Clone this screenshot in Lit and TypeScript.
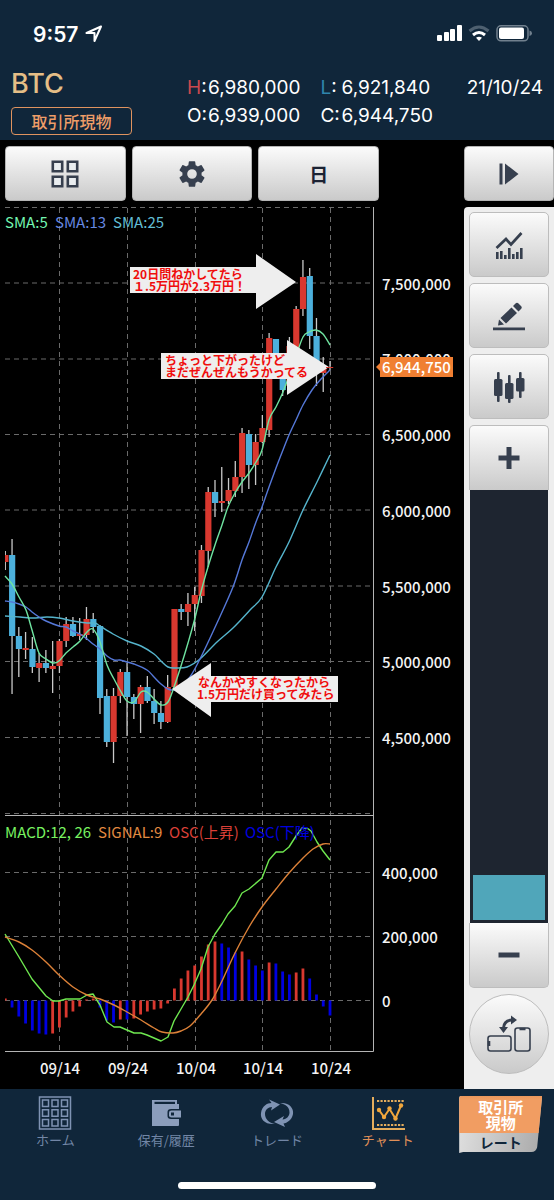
import { LitElement, html, svg, css } from "lit";
import { customElement } from "lit/decorators.js";

type Point = [number, number];
/** open/close edges and wick edges in chart units; up candles are red */
type Candle = [up: number, top: number, bottom: number, high: number, low: number];

const LAST_X = 330;
const DAY = 6.765;
const dayX = (i: number) => LAST_X - (48 - i) * DAY;

const CANDLES: Candle[] = [
  [1, 555, 562, 551, 570], [0, 555, 636, 539, 694], [0, 636, 649, 627, 677],
  [1, 648, 650, 632, 659], [0, 649, 667, 637, 673], [1, 663, 668, 653, 682],
  [0, 663, 668, 650, 673], [1, 666, 669, 641, 693], [1, 641, 666, 639, 673],
  [1, 624, 641, 617, 647], [0, 624, 636, 617, 637], [1, 634, 636, 618, 640],
  [1, 619, 635, 607, 640], [0, 619, 627, 613, 633], [0, 626, 698, 625, 714],
  [0, 696, 742, 689, 747], [1, 696, 742, 688, 763], [1, 672, 696, 669, 703],
  [0, 672, 697, 663, 736], [0, 697, 704, 694, 719], [1, 687, 704, 685, 733],
  [0, 687, 701, 676, 703], [0, 701, 713, 689, 724], [0, 713, 722, 701, 729],
  [1, 687, 722, 675, 723], [1, 609, 687, 609, 687], [0, 609, 612, 604, 620],
  [1, 604, 612, 593, 626], [1, 595, 604, 587, 631], [1, 550, 596, 545, 603],
  [1, 492, 551, 487, 567], [0, 492, 503, 480, 517], [1, 501, 503, 467, 512],
  [1, 490, 501, 478, 504], [1, 477, 491, 461, 497], [1, 433, 477, 428, 493],
  [0, 434, 465, 430, 489], [1, 442, 465, 434, 485], [1, 428, 442, 415, 443],
  [1, 338, 430, 333, 437], [0, 339, 370, 339, 374], [0, 366, 390, 360, 396],
  [1, 346, 386, 337, 390], [1, 309, 350, 306, 356], [1, 277, 309, 260, 316],
  [0, 276, 336, 268, 349], [0, 336, 368, 318, 386], [1, 368, 373, 357, 392],
  [1, 367, 368, 361, 370],
];

const OSC: [rising: number, value: number][] = [
  [1, 2], [0, -7], [0, -16], [0, -23], [0, -30], [0, -33], [0, -34], [1, -33],
  [1, -27], [1, -17], [1, -11], [1, -6], [1, 1], [1, 2], [0, -7], [0, -20],
  [0, -22], [1, -19], [0, -19], [1, -18], [1, -14], [1, -11], [1, -9], [1, -8],
  [1, -3], [1, 12], [1, 22], [1, 30], [1, 35], [1, 44], [1, 56], [1, 59],
  [0, 57], [0, 53], [0, 48], [1, 49], [0, 41], [0, 35], [0, 30], [1, 38],
  [0, 37], [0, 29], [0, 26], [1, 28], [1, 32], [0, 22], [0, 6], [0, -6], [0, -15],
];

const SMA5: Point[] = [
  [5, 576], [12, 584], [19, 597], [26, 610], [32, 630], [39, 653], [46, 659], [53, 663],
  [59, 661], [66, 653], [73, 647], [80, 641], [87, 632], [93, 629], [100, 642], [107, 665],
  [114, 679], [120, 690], [127, 701], [134, 702], [141, 692], [147, 692], [154, 699],
  [161, 705], [168, 702], [174, 687], [181, 666], [188, 643], [195, 618], [201, 592],
  [208, 567], [215, 545], [222, 525], [228, 507], [235, 493], [242, 482], [249, 473],
  [256, 462], [262, 450], [269, 420], [276, 407], [283, 392], [289, 376], [296, 356],
  [303, 337], [309, 332], [316, 330], [323, 334], [330, 345],
];
const SMA13: Point[] = [
  [5, 601], [12, 602], [19, 604], [26, 607], [32, 612], [39, 617], [46, 621], [59, 626],
  [66, 627], [73, 631], [80, 634], [87, 639], [93, 644], [100, 649], [107, 656], [114, 660],
  [120, 660], [127, 662], [134, 664], [147, 670], [154, 677], [161, 684], [168, 689],
  [174, 690], [181, 686], [190, 677], [201, 657], [217, 623], [233, 587], [242, 560],
  [249, 542], [256, 522], [262, 507], [269, 487], [276, 468], [283, 450], [289, 435],
  [296, 420], [303, 405], [312, 390], [321, 379], [330, 370],
];
const SMA25: Point[] = [
  [5, 616], [20, 617], [33, 618], [47, 617], [59, 618], [73, 621], [87, 623], [95, 623],
  [100, 626], [113, 634], [127, 641], [141, 646], [154, 654], [161, 661], [168, 667],
  [175, 668], [187, 667], [200, 659], [217, 642], [233, 628], [250, 610], [262, 597],
  [276, 567], [289, 542], [303, 510], [317, 482], [330, 455],
];
const MACD: Point[] = [
  [5, 934], [19, 957], [32, 979], [46, 996], [53, 1001], [59, 1001], [66, 999], [80, 999],
  [87, 995], [93, 994], [100, 1005], [107, 1022], [114, 1027], [120, 1027], [134, 1033],
  [141, 1033], [147, 1035], [161, 1041], [168, 1037], [174, 1021], [181, 1009], [188, 997],
  [194, 985], [201, 969], [208, 947], [215, 934], [222, 924], [228, 914], [235, 906],
  [242, 893], [249, 889], [262, 878], [269, 860], [276, 852], [283, 852], [289, 847],
  [296, 836], [302, 828], [307, 828], [311, 831], [317, 842], [323, 851], [330, 860],
];
const SIGNAL: Point[] = [
  [5, 937], [19, 942], [32, 950], [46, 962], [59, 975], [73, 987], [87, 995], [100, 999],
  [114, 1005], [127, 1012], [141, 1020], [154, 1028], [162, 1032], [173, 1033], [181, 1031],
  [190, 1026], [201, 1014], [212, 1000], [222, 981], [235, 953], [249, 927], [262, 907],
  [276, 889], [289, 873], [303, 858], [313, 849], [323, 844], [330, 844],
];

const PRICE_TICKS: [string, number][] = [
  ["7,500,000", 283], ["7,000,000", 358], ["6,500,000", 434], ["6,000,000", 510],
  ["5,500,000", 586], ["5,000,000", 661], ["4,500,000", 737],
];
const MACD_TICKS: [string, number][] = [["400,000", 872], ["200,000", 936], ["0", 1000]];
const DATES: [string, number][] = [
  ["09/14", 59], ["09/24", 127], ["10/04", 195], ["10/14", 262], ["10/24", 330],
];

/** Catmull-Rom through the samples, written as cubic segments */
const smooth = (p: Point[]) => {
  let d = `M${p[0][0]} ${p[0][1]}`;
  for (let i = 0; i < p.length - 1; i++) {
    const a = p[i - 1] ?? p[i], b = p[i], c = p[i + 1], e = p[i + 2] ?? c;
    d += `C${b[0] + (c[0] - a[0]) / 6} ${b[1] + (c[1] - a[1]) / 6} ${c[0] - (e[0] - b[0]) / 6} ${c[1] - (e[1] - b[1]) / 6} ${c[0]} ${c[1]}`;
  }
  return d;
};
const straight = (p: Point[]) => "M" + p.map((q) => q.join(" ")).join("L");

@customElement("trade-chart")
export class TradeChart extends LitElement {
  static styles = css`
    :host { display: block; }
    .plot { display: block; width: 100%; height: auto; }
    text { font-family: "Noto Sans CJK JP", sans-serif; font-size: 15px; }
    .tick { fill: #f4f4f4; font-weight: 500; }
    .date { text-anchor: middle; }
    .grid { stroke: #6a6a6a; stroke-width: 1; stroke-dasharray: 5 4; fill: none; }
    .axis { stroke: #b4b4b4; stroke-width: 1; fill: none; }
    .wick { stroke: #c9c9c9; stroke-width: 1.3; }
    .up { fill: #d9382f; }
    .down { fill: #4cb0dc; }
    .osc-up { fill: #d9382f; }
    .osc-down { fill: #0000e0; }
    .line { fill: none; stroke-width: 1.4; stroke-linejoin: round; }
    .sma5 { stroke: #6fe3a0; }
    .sma13 { stroke: #5578d8; }
    .sma25 { stroke: #55b4cc; }
    .macd { stroke: #6fe850; }
    .signal { stroke: #dc8138; }
    .t-sma5 { fill: #73f5b0; }
    .t-sma13 { fill: #6688e0; }
    .t-sma25 { fill: #62bdd4; }
    .t-macd { fill: #78f260; }
    .t-signal { fill: #e38a40; }
    .t-up { fill: #dc4038; }
    .t-down { fill: #0000e0; }
    .tag { fill: #f07f32; }
    .tag-text { fill: #fff; font-weight: 500; }
    .note { fill: #eeeeee; }
    .note-text { fill: #f00d0d; font-size: 12px; font-weight: 700; }
  `;

  render() {
    return html`<svg class="plot" viewBox="0 207 464 882" role="img" aria-label="BTC">
      <defs><clipPath id="area"><rect x="5" y="207" width="369" height="845" /></clipPath></defs>
      ${[207.5, 283, 359, 434.5, 510, 586, 661.5, 737.5, 813.5, 872.5, 936.5, 1000.5].map(
        (y) => svg`<path class="grid" d="M5 ${y}H373" />`)}
      ${DATES.map(([, x]) => svg`<path class="grid" d="M${x + 0.5} 208V1051" />`)}
      <g clip-path="url(#area)">
        ${CANDLES.map(([up, top, bottom, high, low], i) => svg`
          <path class="wick" d="M${dayX(i)} ${high}V${low}" />
          <rect class=${up ? "up" : "down"} x=${dayX(i) - 3} y=${top} width="6.2" height=${bottom - top} />`)}
        ${OSC.map(([up, v], i) => svg`
          <rect class=${up ? "osc-up" : "osc-down"} x=${dayX(i) - 1.4} y=${v > 0 ? 1000.5 - v : 1000.5}
            width="2.8" height=${Math.abs(v)} />`)}
      </g>
      <path class="line sma25" d=${smooth(SMA25)} />
      <path class="line sma13" d=${smooth(SMA13)} />
      <path class="line sma5" d=${smooth(SMA5)} />
      <path class="line macd" d=${straight(MACD)} />
      <path class="line signal" d=${smooth(SIGNAL)} />
      <path class="axis" d="M373.5 207V1051.5H5M5 815.5H373.5" />

      <text class="t-sma5" x="5" y="228">SMA:5</text>
      <text class="t-sma13" x="55" y="228">SMA:13</text>
      <text class="t-sma25" x="113" y="228">SMA:25</text>
      <text class="t-macd" x="5" y="838">MACD:12, 26</text>
      <text class="t-signal" x="98" y="838">SIGNAL:9</text>
      <text class="t-up" x="169" y="838">OSC(上昇)</text>
      <text class="t-down" x="245" y="838">OSC(下降)</text>

      ${PRICE_TICKS.map(([t, y]) => svg`<text class="tick" x="382" y=${y + 7}>${t}</text>`)}
      ${MACD_TICKS.map(([t, y]) => svg`<text class="tick" x="382" y=${y + 7}>${t}</text>`)}
      ${DATES.map(([t, x]) => svg`<text class="tick date" x=${x + 1} y="1074">${t}</text>`)}

      <path class="tag" d="M376 367L380 363V357H453V377H380V371Z" />
      <text class="tag-text" x="382" y="373">6,944,750</text>

      <path class="note" d="M130 267H256V254L296 282L256 309V293H130Z" />
      <text class="note-text" x="133" y="279">20日問ねかしてたら</text>
      <text class="note-text" x="133" y="291">１.5万円が2.3万円！</text>
      <path class="note" d="M161 353H287V340L329 367L287 395V379H161Z" />
      <text class="note-text" x="165" y="365">ちょっと下がったけど</text>
      <text class="note-text" x="165" y="377">まだぜんぜんもうかってる</text>
      <path class="note" d="M338 676H211V663L172 689L211 717V702H338Z" />
      <text class="note-text" x="198" y="687">なんかやすくなったから</text>
      <text class="note-text" x="197" y="699">1.5万円だけ買ってみたら</text>
      <rect class="up" x="326" y="367" width="7" height="1" />
    </svg>`;
  }
}

@customElement("app-root")
export class AppRoot extends LitElement {
  static styles = css`
    :host {
      display: block;
      background: #10263a;
      color: #fff;
      font-family: Inter, "Noto Sans CJK JP", sans-serif;
    }
    button { font: inherit; margin: 0; padding: 0; cursor: pointer; }
    svg { display: block; }
    .status {
      display: flex; align-items: center; justify-content: space-between;
      height: 68px; padding: 0 22px 0 33px; box-sizing: border-box;
    }
    .clock { display: flex; align-items: center; gap: 7px; font-size: 21px; font-weight: 600; }
    .header {
      display: flex; align-items: flex-start;
      height: 72px; padding: 0 11px; box-sizing: border-box;
    }
    .market { flex: 0 0 176px; }
    .symbol { margin: 0; font-size: 27px; line-height: 32px; font-weight: 500; color: #e5be86; }
    .kind {
      width: 121px; height: 28px; margin-top: 7px; box-sizing: border-box;
      display: block; border: 1px solid #e0935f; border-radius: 4px;
      background: none; color: #ee9d68; font-size: 16px; line-height: 24px; font-weight: 500;
      font-family: "Noto Sans CJK JP", sans-serif;
    }
    .quote {
      display: grid; grid-template-columns: 21px auto 21px auto;
      margin: 6px 0 0; font-size: 19px; line-height: 28px;
    }
    .quote dt, .quote dd { margin: 0; white-space: nowrap; }
    .quote .gap { margin-right: 20px; }
    .high { color: #c9494e; }
    .low { color: #2f86ad; }
    .day { margin: 6px 0 0 auto; font-size: 19px; line-height: 28px; }

    .board { display: grid; grid-template-columns: 1fr 90px; background: #000; }
    .tools { display: flex; gap: 6px; padding: 6px 85px 6px 5px; }
    .tools.end { padding: 6px 0; }
    .key {
      display: flex; align-items: center; justify-content: center;
      flex: 1; height: 55px; box-sizing: border-box;
      border: 1px solid #b4b4b4; border-radius: 4px;
      background: linear-gradient(#fbfbfb, #cacaca);
      color: #363f4e;
    }
    .unit { font-family: "Noto Sans CJK JP", sans-serif; font-size: 19px; font-weight: 700; color: #1b2233; }
    .side {
      display: flex; flex-direction: column; gap: 6px;
      padding: 5px 5px 15px; background: #eeeeee; border-radius: 4px 0 0 0;
    }
    .side .key { flex: 0 0 65px; border: 1px solid #bdbdbd; border-radius: 5px; }
    .zoom { flex: 1; display: flex; flex-direction: column; }
    .zoom .first { border-radius: 5px 5px 0 0; border-bottom: 0; }
    .zoom .last { border-radius: 0 0 5px 5px; border-top: 0; }
    .range {
      flex: 1 1 300px; min-height: 0; width: 78px; margin: 0 1px; padding: 3px; box-sizing: border-box;
      appearance: none; -webkit-appearance: none;
      writing-mode: vertical-lr; direction: rtl; background: #1e2530;
    }
    .range::-webkit-slider-runnable-track { width: 72px; height: 100%; background: none; }
    .range::-webkit-slider-thumb {
      -webkit-appearance: none; width: 72px; height: 45px; background: #50a6ba; border-radius: 0;
    }
    .side .rotate { flex: 0 0 80px; border-radius: 50%; }

    .nav { display: grid; grid-template-columns: repeat(5, 1fr); height: 93px; padding-top: 6px; box-sizing: border-box; }
    .tab {
      display: flex; flex-direction: column; align-items: center;
      color: #7286a6; text-decoration: none; font-size: 13px; line-height: 18px;
      font-family: "Noto Sans CJK JP", sans-serif;
    }
    .tab.on { color: #e09058; }
    .rate {
      justify-self: start; width: 83px; height: 58px; margin-left: 16px; border: 0;
      background: linear-gradient(#e8955a, #f19d62 5px, #f19d62 38px, transparent 38px),
        linear-gradient(100deg, #e2e2e2, #a9a9a9);
      clip-path: path("M0 3Q0 1 2 1H83L78 52Q77 57 72 57H4L0 58Z");
      font-family: "Noto Sans CJK JP", sans-serif; font-weight: 700; color: #fff; font-size: 15px; line-height: 16px;
    }
    .rate-name { display: block; height: 38px; padding: 4px 0 0; box-sizing: border-box; }
    .rate-label { display: block; height: 20px; font-size: 14px; line-height: 18px; color: #10263a; }
    .foot { padding-bottom: 11px; }
    .home-bar { width: 198px; height: 7px; margin: 0 auto; border-radius: 4px; background: #fff; }
  `;

  render() {
    return html`
      <div class="status">
        <span class="clock">9:57
          <svg width="18" height="18" viewBox="0 0 18 18" fill="none" stroke="#fff" stroke-width="2" stroke-linejoin="round">
            <path d="M16 1.500L1.500 8H9.500V16Z" />
          </svg>
        </span>
        <svg width="95" height="18" viewBox="0 0 95 18" aria-hidden="true">
          <g fill="#fff">
            <rect x="0" y="10" width="5" height="6" rx="1" /><rect x="7" y="7" width="5" height="9" rx="1" />
            <rect x="13" y="4" width="5" height="12" rx="1" /><rect x="20" y="0" width="5" height="16" rx="1" />
            <path d="M42 16L39 12.800Q42 10.500 45 12.800Z" />
          </g>
          <path d="M32.500 6Q42 -2 51.500 6" fill="none" stroke="#4e6070" stroke-width="3" />
          <path d="M36 10Q42 5 48 10" fill="none" stroke="#fff" stroke-width="3" />
          <rect x="60" y="0.800" width="31" height="15" rx="4" fill="none" stroke="#71808e" stroke-width="1.500" />
          <rect x="62" y="2.500" width="25" height="11.600" rx="2" fill="#fff" />
          <path d="M92.500 5.500Q95 6 95 8.300T92.500 11Z" fill="#71808e" />
        </svg>
      </div>

      <header class="header">
        <div class="market">
          <h1 class="symbol">BTC</h1>
          <button class="kind">取引所現物</button>
        </div>
        <dl class="quote">
          <dt><span class="high">H</span>:</dt><dd class="gap">6,980,000</dd>
          <dt><span class="low">L</span>:</dt><dd>6,921,840</dd>
          <dt>O:</dt><dd class="gap">6,939,000</dd>
          <dt>C:</dt><dd>6,944,750</dd>
        </dl>
        <time class="day">21/10/24</time>
      </header>

      <main class="board">
        <div class="tools">
          <button class="key" aria-label="grid">
            <svg width="28" height="28" viewBox="0 0 28 28" fill="#e9edf0" stroke="currentColor" stroke-width="2.600">
              <path d="M1.800 1.800h9.400v9.400h-9.400zM16.800 1.800h9.400v9.400h-9.400zM1.800 16.800h9.400v9.400h-9.400zM16.800 16.800h9.400v9.400h-9.400z" />
            </svg>
          </button>
          <button class="key" aria-label="settings">
            <svg width="32" height="32" viewBox="0 0 24 24" fill="currentColor">
              <path d="M19.140 12.940c.04-.3.060-.61.060-.94s-.02-.64-.07-.94l2.030-1.580a.49.49 0 0 0 .12-.61l-1.920-3.320a.488.488 0 0 0-.59-.22l-2.390.96c-.5-.38-1.030-.7-1.620-.94l-.36-2.540a.484.484 0 0 0-.48-.41h-3.840c-.24 0-.43.17-.47.41l-.36 2.540c-.59.24-1.130.57-1.620.94l-2.390-.96c-.22-.08-.47 0-.59.22L2.740 8.870c-.12.21-.08.47.12.61l2.030 1.580c-.05.3-.09.63-.09.94s.02.64.07.94l-2.030 1.580a.49.49 0 0 0-.12.61l1.920 3.320c.12.22.37.29.59.22l2.390-.96c.5.38 1.030.7 1.620.94l.36 2.540c.05.24.24.41.48.41h3.840c.24 0 .44-.17.47-.41l.36-2.540c.59-.24 1.130-.56 1.620-.94l2.390.96c.22.08.47 0 .59-.22l1.920-3.320c.12-.22.070-.47-.12-.61l-2.010-1.580zM12 15.600A3.600 3.600 0 1 1 12 8.400a3.600 3.600 0 0 1 0 7.200z" />
            </svg>
          </button>
          <button class="key unit">日</button>
        </div>
        <div class="tools end">
          <button class="key" aria-label="expand">
            <svg width="20" height="22" viewBox="0 0 20 22" fill="currentColor">
              <path d="M0.500 0.500h3v21h-3zM6 0.500L19.500 11L6 21.500Z" />
            </svg>
          </button>
        </div>

        <trade-chart></trade-chart>

        <div class="side">
          <button class="key" aria-label="indicators">
            <svg width="28" height="28" viewBox="0 0 28 28" fill="currentColor">
              <path d="M1.500 17L11 8L16 13.500L26.500 2" fill="none" stroke="currentColor" stroke-width="2.700" />
              <path d="M1 21h2.600v7H1zM5 20h2.600v8H5zM9 24h2.600v4H9zM13 17h2.600v11H13zM17 23h2.600v5H17zM21 21h2.600v7H21zM25 17h2.600v11H25z" />
            </svg>
          </button>
          <button class="key" aria-label="draw">
            <svg width="34" height="30" viewBox="0 0 34 30" fill="currentColor">
              <path d="M1 26.500h32v2.800H1zM6 24.500L7 18.500L12 23.500ZM8.500 17L19.500 6.500L25 12L14 22.500ZM21 5L23.500 2.500Q25 1 26.500 2.500L29 5Q30.500 6.500 29 8L26.500 10.500Z" />
            </svg>
          </button>
          <button class="key" aria-label="candles">
            <svg width="32" height="32" viewBox="0 0 32 32" fill="currentColor">
              <rect x="1" y="8" width="8.500" height="17" rx="1.500" /><rect x="4" y="1" width="2.600" height="30" rx="1" />
              <rect x="12" y="12" width="8.500" height="16" rx="1.500" /><rect x="15" y="4" width="2.600" height="28" rx="1" />
              <rect x="23" y="7" width="8.500" height="13.500" rx="1.500" /><rect x="26" y="1" width="2.600" height="26" rx="1" />
            </svg>
          </button>
          <div class="zoom">
            <button class="key first" aria-label="zoom in">
              <svg width="22" height="24" viewBox="0 0 22 24" fill="currentColor"><path d="M8.500 1h5v8.500h8v5h-8v8.500h-5v-8.500h-8v-5h8z" /></svg>
            </button>
            <input class="range" type="range" min="0" max="100" value="0" aria-label="zoom" />
            <button class="key last" aria-label="zoom out">
              <svg width="22" height="6" viewBox="0 0 22 6" fill="currentColor"><path d="M0.500 0.500h21v5h-21z" /></svg>
            </button>
          </div>
          <button class="key rotate" aria-label="rotate">
            <svg width="44" height="38" viewBox="0 0 44 38" fill="none" stroke="currentColor" stroke-width="1.600">
              <rect x="1" y="21" width="23" height="15" rx="2.500" />
              <rect x="28" y="13" width="15" height="23" rx="2.500" />
              <path d="M2 26v5M32.500 14h6" stroke-width="2.600" />
              <path d="M16.500 13Q17 5.500 25 5" stroke-width="3" />
              <path d="M24 0.500L30 5L24 9.500ZM12 12H21L16.500 18Z" fill="currentColor" stroke="none" />
            </svg>
          </button>
        </div>
      </main>

      <nav class="nav">
        <a class="tab" href="#home">
          <svg width="34" height="36" viewBox="0 0 34 36" fill="none" stroke="#7f93b3" stroke-width="1.500">
            <rect x="1.500" y="2" width="31" height="32" />
            <path d="M4.500 5h6v6.500h-6zM14 5h6v6.500h-6zM23.500 5h6v6.500h-6zM4.500 14.700h6v6.500h-6zM14 14.700h6v6.500h-6zM23.500 14.700h6v6.500h-6zM4.500 24.400h6v6.500h-6zM14 24.400h6v6.500h-6zM23.500 24.400h6v6.500h-6z" />
          </svg>ホーム
        </a>
        <a class="tab" href="#assets">
          <svg width="30" height="36" viewBox="0 0 30 36" fill="#8b9dbb">
            <path d="M1 5H26V9H28V14H20Q16.500 14 16.500 17V21Q16.500 24 20 24H28V30Q28 31 27 31H1Z" />
            <path d="M3.500 6.800H24V9H3.500Z" fill="#10263a" />
            <path d="M20.500 15.500H30V22.500H20.500Q18 22.500 18 20.500V17.500Q18 15.500 20.500 15.500Z" />
            <rect x="20" y="17.500" width="3" height="3" fill="#10263a" />
          </svg>保有/履歴
        </a>
        <a class="tab" href="#trade">
          <svg width="34" height="36" viewBox="0 0 34 36" fill="#7f93b3">
            <path d="M15 29C5 30 0 24 1 18C2 11 7 8 11.500 8L9 4.500L20 9.500L11 15.500L12 12C8 12 5 15 5 19C5 24 9 28 15 29Z" />
            <path d="M20 8C29 7 34 13 33 19C32 25 27 28 23.500 28.500L25 32L14 27L24 21L22.500 24.500C27 24 29.500 21 29.500 17.500C29.500 12 25 9 20 8Z" />
          </svg>トレード
        </a>
        <a class="tab on" href="#chart">
          <svg width="34" height="36" viewBox="0 0 34 36" fill="none" stroke="#e5ad5c">
            <path d="M2 2V34H34" stroke-width="2" />
            <path d="M6 6H33M6 30H33" stroke-width="2" stroke-dasharray="2.200 1.300" />
            <path d="M8 15L13 22L18.500 14L24.500 23.500L30 10.500" stroke="#f0a63c" stroke-width="2" />
            <g fill="#f0a63c" stroke="none"><circle cx="8" cy="15" r="2.200" /><circle cx="13" cy="22" r="2.200" /><circle cx="18.500" cy="13.500" r="2.200" /><circle cx="24.500" cy="23.500" r="2.200" /><circle cx="30" cy="10.500" r="2.200" /></g>
          </svg>チャート
        </a>
        <button class="rate">
          <span class="rate-name">取引所<br />現物</span>
          <span class="rate-label">レート</span>
        </button>
      </nav>
      <div class="foot"><div class="home-bar"></div></div>
    `;
  }
}
